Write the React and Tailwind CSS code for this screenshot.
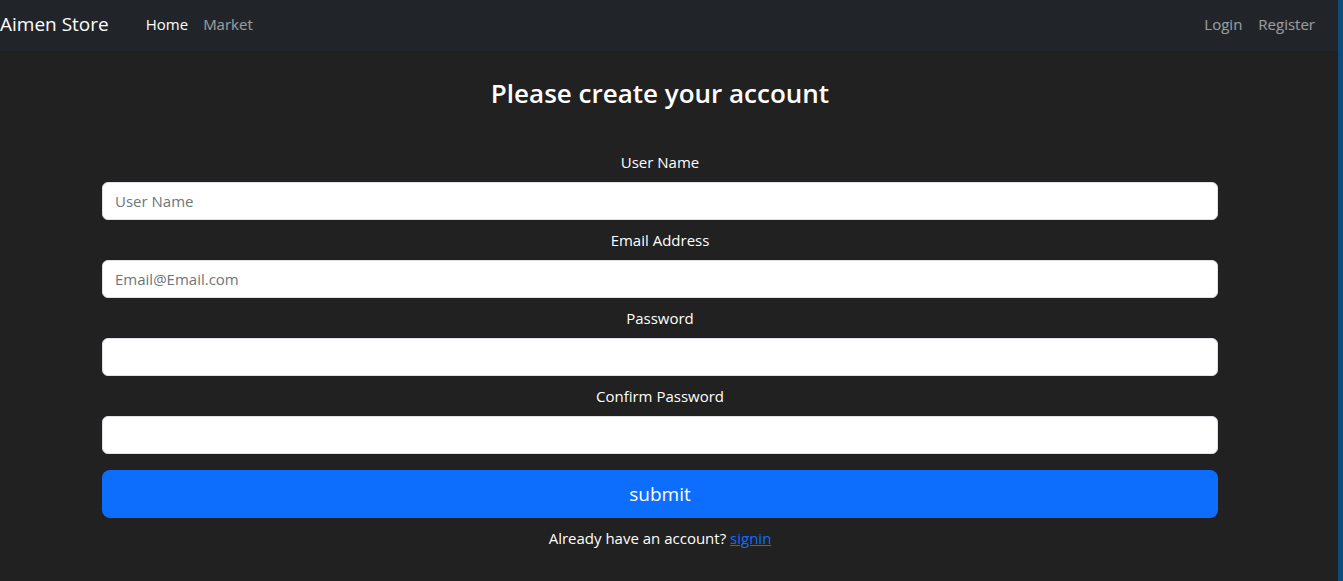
const labelCls = "text-[15px] text-white leading-[24px] mb-[8px]"
const inputCls =
  "w-full h-[38px] rounded-[6px] border border-[#dee2e6] bg-white px-[12px] text-[15px] text-[#212529] placeholder:text-[#6c757d] outline-none"

const Field = ({ label, placeholder, type = "text" }) => (
  <div className="flex flex-col items-center">
    <label className={labelCls}>{label}</label>
    <input className={inputCls} type={type} placeholder={placeholder} />
  </div>
)

export default function App() {
  return (
    <div
      className="flex w-[1343px] h-[581px] bg-[#212121] overflow-hidden"
      style={{ fontFamily: '"Open Sans", "Noto Sans", sans-serif' }}
    >
      <div className="flex-1 flex flex-col">
        <nav className="h-[51px] bg-[#212529] flex items-center pr-[23px] pb-[4px]">
          <span className="text-[19px] text-white leading-[24px] mr-[37px]">Aimen Store</span>
          <div className="flex gap-[15px] text-[15px] leading-[24px]">
            <a className="text-white">Home</a>
            <a className="text-white/55">Market</a>
          </div>
          <div className="ml-auto flex gap-[16px] text-[15px] leading-[24px] text-white/55">
            <a>Login</a>
            <a>Register</a>
          </div>
        </nav>
        <main className="w-[1320px] flex flex-col items-center">
          <div className="w-[1116px] flex flex-col">
            <h2 className="text-center text-white text-[26px] font-semibold leading-[36px] mt-[24px] mb-[39px]">
              Please create your account
            </h2>
            <div className="flex flex-col gap-[8px]">
              <Field label="User Name" placeholder="User Name" />
              <Field label="Email Address" placeholder="Email@Email.com" type="email" />
              <Field label="Password" type="password" />
              <Field label="Confirm Password" type="password" />
            </div>
            <button className="mt-[16px] h-[48px] w-full rounded-[8px] bg-[#0d6efd] text-white text-[19px]">
              submit
            </button>
            <p className="text-center text-white text-[15px] leading-[24px] mt-[8px]">
              Already have an account?{" "}
              <a className="text-[#0d6efd] underline">signin</a>
            </p>
          </div>
        </main>
      </div>
      <div className="w-[5px] bg-[#0e4a7a]" />
    </div>
  )
}
